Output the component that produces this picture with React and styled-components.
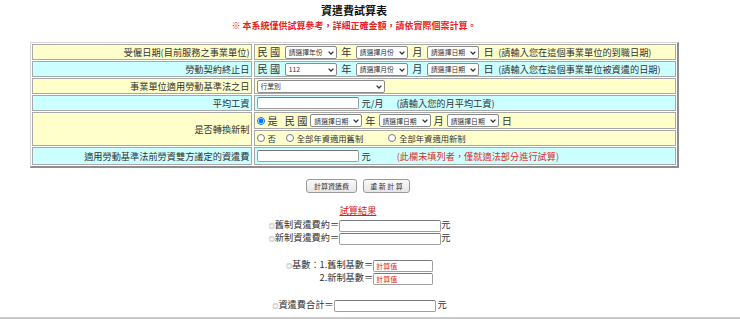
import React from 'react';
import styled, { createGlobalStyle } from 'styled-components';

const GlobalStyle = createGlobalStyle`
    html, body {
        margin: 0;
        padding: 0;
        background: #fff;
    }
    body {
        font-family: "Noto Sans CJK TC", "Noto Sans", sans-serif;
        color: #222;
    }
`
const Page = styled.div`
    width: 740px;
    height: 319px;
    overflow: hidden;
`
const Main = styled.div`
    width: 708px;
    text-align: center;
    font-size: 9.2px;
`
const Title = styled.div`
    padding-top: 4px;
    font-size: 11px;
    font-weight: bold;
    line-height: 13px;
    color: #111;
`
const Notice = styled.div`
    margin-top: 3px;
    font-size: 9px;
    font-weight: bold;
    line-height: 12px;
    color: #e52525;
`
const Form = styled.div`
    display: grid;
    grid-template-columns: 220px 422px;
    column-gap: 2px;
    row-gap: 1px;
    width: max-content;
    margin: 10px auto 0;
    padding: 1px;
    border-style: solid;
    border-width: 1px 2px 2px 1px;
    border-color: #d6d6d6 #8e8e8e #8e8e8e #d6d6d6;
    text-align: left;
`
const Cell = styled.div`
    display: flex;
    align-items: center;
    min-height: ${props => props.$tall ? '16px' : '14px'};
    background: ${props => props.$tone === 'cyan' ? '#ccffff' : '#ffffcc'};
    border: 1px solid #a8a8a8;
    grid-row: span ${props => props.$rows || 1};
    white-space: nowrap;
`
const Label = styled(Cell)`
    justify-content: flex-end;
    padding-right: 1px;
    color: #333;
`
const Value = styled(Cell)`
    gap: ${props => props.$gap ?? 4.5}px;
    padding-left: ${props => props.$pad || 2}px;
    font-size: ${props => props.$small ? '8.3px' : 'inherit'};
`
const Big = styled.span`
    font-size: 10.2px;
    line-height: 12px;
    color: #333;
    margin-left: ${props => props.$ml || 0}px;
`
const Hint = styled.span`
    color: ${props => props.$red ? '#e02c2c' : '#333'};
    margin-left: ${props => props.$ml || 0}px;
`
const SelectWrap = styled.span`
    position: relative;
    display: inline-block;
    height: 13px;
`
const Select = styled.select`
    appearance: none;
    width: ${props => props.$w || 52}px;
    height: 13px;
    padding: 0 9px 0 3px;
    font-family: "Noto Sans CJK TC", sans-serif;
    font-size: 6.8px;
    color: #333;
    background: #fff;
    border: 1px solid #8a8a8a;
    border-radius: 2px;
    box-sizing: border-box;
    vertical-align: top;
`
const Chevron = styled.svg`
    position: absolute;
    right: 3px;
    top: 5px;
    width: 6px;
    height: 4px;
    pointer-events: none;
`
const TextBox = styled.input`
    width: ${props => props.$w || 102}px;
    height: 12px;
    padding: 0 2px;
    box-sizing: border-box;
    font-family: "Noto Sans CJK TC", sans-serif;
    font-size: 7px;
    color: ${props => props.$red ? '#d22' : '#333'};
    border: 1px solid #a0a0a0;
    border-top-color: #7a7a7a;
    border-radius: 2px;
    background: #fff;
    vertical-align: middle;
`
const Radio = styled.input`
    width: 8px;
    height: 8px;
    margin: 0 3px 0 0;
`
const Choice = styled.label`
    display: inline-flex;
    align-items: center;
    margin-left: ${props => props.$ml || 0}px;
    font-size: ${props => props.$big ? '10.2px' : 'inherit'};
    color: #333;
`
const Buttons = styled.div`
    display: flex;
    justify-content: center;
    gap: 6px;
    margin-top: 11px;
    padding-left: 8px;
`
const Button = styled.button`
    height: 14px;
    width: ${props => props.$w}px;
    padding: 0;
    font-family: "Noto Sans CJK TC", sans-serif;
    font-size: 7px;
    color: #333;
    background: linear-gradient(#fafafa, #e6e6e6);
    border: 1px solid #9a9a9a;
    border-radius: 3px;
`
const Results = styled.div`
    margin-top: 10px;
    padding-left: 8px;
`
const Heading = styled.div`
    line-height: 15px;
    color: #d42020;
    text-decoration: underline;
`
const Line = styled.div`
    height: 13px;
    line-height: 13px;
    margin-top: ${props => props.$gap || 0}px;
    color: #333;
    white-space: pre;
`
const Bullet = styled.span`
    display: inline-block;
    width: 9.2px;
    text-align: right;
    font-size: 6px;
    color: #777;
`
const Rule = styled.div`
    margin-top: 6px;
    height: 2px;
    background: #c8c8c8;
`

const DateSelect = ({ text, w }) => (
    <SelectWrap>
        <Select $w={w} defaultValue={text}>
            <option>{text}</option>
        </Select>
        <Chevron viewBox="0 0 6 4">
            <path d="M0.6 0.6 L3 3 L5.4 0.6" fill="none" stroke="#333" strokeWidth="1.3" />
        </Chevron>
    </SelectWrap>
)

export default function App() {
    return (
        <Page>
            <GlobalStyle />
            <Main>
                <Title>資遣費試算表</Title>
                <Notice>※ 本系統僅供試算參考，詳細正確金額，請依實際個案計算。</Notice>

                <Form>
                    <Label>受僱日期(目前服務之事業單位)</Label>
                    <Value $pad={3}>
                        <Big>民 國</Big>
                        <DateSelect text="請選擇年份" />
                        <Big>年</Big>
                        <DateSelect text="請選擇月份" />
                        <Big>月</Big>
                        <DateSelect text="請選擇日期" />
                        <Big>日</Big>
                        <Hint>(請輸入您在這個事業單位的到職日期)</Hint>
                    </Value>

                    <Label $tone="cyan">勞動契約終止日</Label>
                    <Value $tone="cyan" $pad={3}>
                        <Big>民 國</Big>
                        <DateSelect text="112" />
                        <Big>年</Big>
                        <DateSelect text="請選擇月份" />
                        <Big>月</Big>
                        <DateSelect text="請選擇日期" />
                        <Big>日</Big>
                        <Hint>(請輸入您在這個事業單位被資遣的日期)</Hint>
                    </Value>

                    <Label>事業單位適用勞動基準法之日</Label>
                    <Value>
                        <DateSelect text="行業別" w={128} />
                    </Value>

                    <Label $tone="cyan">平均工資</Label>
                    <Value $tone="cyan" $gap={3}>
                        <TextBox readOnly />
                        <Hint>元/月</Hint>
                        <Hint $ml={10}>(請輸入您的月平均工資)</Hint>
                    </Value>

                    <Label $rows={2}>是否轉換新制</Label>
                    <Value $gap={3}>
                        <Choice $big>
                            <Radio type="radio" name="mode" defaultChecked />是
                        </Choice>
                        <Big $ml={4}>民 國</Big>
                        <DateSelect text="請選擇日期" />
                        <Big>年</Big>
                        <DateSelect text="請選擇日期" />
                        <Big>月</Big>
                        <DateSelect text="請選擇日期" />
                        <Big>日</Big>
                    </Value>
                    <Value $gap={0} $small>
                        <Choice><Radio type="radio" name="mode" />否</Choice>
                        <Choice $ml={10}><Radio type="radio" name="mode" />全部年資適用舊制</Choice>
                        <Choice $ml={25}><Radio type="radio" name="mode" />全部年資適用新制</Choice>
                    </Value>

                    <Label $tone="cyan" $tall>適用勞動基準法前勞資雙方議定的資遣費</Label>
                    <Value $tone="cyan" $tall $gap={3}>
                        <TextBox readOnly />
                        <Hint>元</Hint>
                        <Hint $red $ml={23}>(此欄未填列者，僅就適法部分進行試算)</Hint>
                    </Value>
                </Form>

                <Buttons>
                    <Button $w={51}>計算資遣費</Button>
                    <Button $w={47}>重 新 計 算</Button>
                </Buttons>

                <Results>
                    <Heading>試算結果</Heading>
                    <Line><Bullet>◎</Bullet>舊制資遣費約＝<TextBox readOnly />元</Line>
                    <Line><Bullet>◎</Bullet>新制資遣費約＝<TextBox readOnly />元</Line>
                    <Line $gap={14}><Bullet>◎</Bullet>基數：1.舊制基數＝<TextBox $w={60} $red readOnly defaultValue="計算值" /></Line>
                    <Line>{'　　　　'}2.新制基數＝<TextBox $w={60} $red readOnly defaultValue="計算值" /></Line>
                    <Line $gap={14}><Bullet>◎</Bullet>資遣費合計＝<TextBox readOnly /> 元</Line>
                </Results>
            </Main>
            <Rule />
        </Page>
    );
}
